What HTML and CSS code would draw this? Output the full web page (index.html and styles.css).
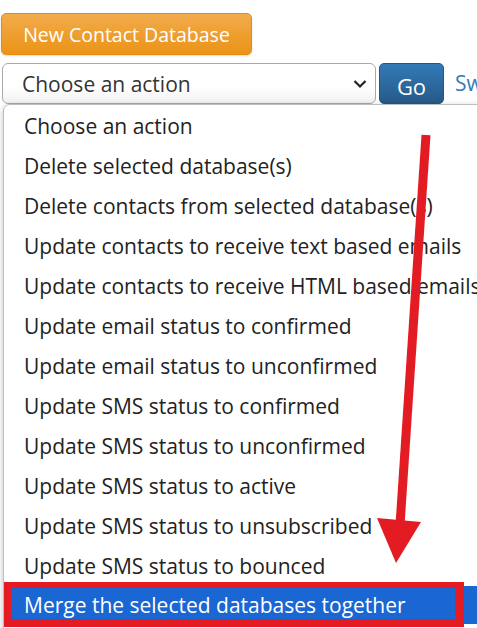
FILE: index.html
```html
<!DOCTYPE html>
<html>
<head>
<meta charset="utf-8">
<link rel="stylesheet" href="styles.css">
</head>
<body>
<div class="page">
  <div class="top">
    <button class="btn-new">New Contact Database</button>
  </div>
  <div class="actions">
    <div class="select">
      <span class="select-text">Choose an action</span>
      <svg class="chev" width="14" height="10" viewBox="0 0 14 10"><path d="M1.5 2 L7 7.5 L12.5 2" fill="none" stroke="#222" stroke-width="2.2"/></svg>
    </div>
    <button class="btn-go">Go</button>
    <a class="link" href="#">Switch</a>
  </div>

  <ul class="menu">
    <li>Choose an action</li>
    <li>Delete selected database(s)</li>
    <li>Delete contacts from selected database(s)</li>
    <li>Update contacts to receive text based emails</li>
    <li>Update contacts to receive HTML based emails</li>
    <li>Update email status to confirmed</li>
    <li>Update email status to unconfirmed</li>
    <li>Update SMS status to confirmed</li>
    <li>Update SMS status to unconfirmed</li>
    <li>Update SMS status to active</li>
    <li>Update SMS status to unsubscribed</li>
    <li>Update SMS status to bounced</li>
    <li class="active">Merge the selected databases together</li>
  </ul>

  <div class="highlight-box"></div>

  <svg class="arrow" width="477" height="628" viewBox="0 0 477 628">
    <line x1="426" y1="135" x2="400" y2="525" stroke="#e31c23" stroke-width="9"/>
    <polygon points="377,518 421,522 396,563" fill="#e31c23"/>
  </svg>
</div>
</body>
</html>
```
FILE: styles.css
```css
html, body {
  margin: 0;
  padding: 0;
  background: #fff;
  font-family: "Open Sans", "Noto Sans", sans-serif;
  overflow: hidden;
}
.page {
  position: relative;
  width: 477px;
  height: 628px;
  overflow: hidden;
}
.top {
  padding: 13px 0 0 1px;
}
.btn-new {
  display: block;
  height: 42px;
  width: 251px;
  border: 1px solid #e38d13;
  border-radius: 5px;
  background: linear-gradient(#f2ab4c, #eb9316);
  color: #fff;
  font-family: "Open Sans", sans-serif;
  font-size: 19.5px;
  padding: 0;
  box-shadow: 0 1px 2px rgba(0,0,0,0.15);
}
.actions {
  display: flex;
  align-items: flex-start;
  padding: 8px 0 0 2px;
  gap: 3px;
  white-space: nowrap;
}
.select {
  box-sizing: border-box;
  flex: 0 0 374px;
  width: 374px;
  height: 41px;
  border: 1px solid #a9a9a9;
  border-radius: 6px;
  background: linear-gradient(#fff 60%, #f1f1f1);
  display: flex;
  align-items: center;
  justify-content: space-between;
  padding: 0 8px 0 19px;
}
.select-text {
  font-size: 21px;
  color: #333;
}
.chev {
  margin-top: 1px;
}
.btn-go {
  box-sizing: border-box;
  flex: 0 0 65px;
  width: 65px;
  height: 41px;
  border: 1px solid #245580;
  border-radius: 5px;
  background: linear-gradient(#337ab7, #265a88);
  color: #fff;
  font-family: "Open Sans", sans-serif;
  font-size: 22px;
  padding: 5px 0 0;
}
.link {
  flex: 0 0 auto;
  margin-left: 8px;
  margin-top: 6px;
  font-size: 21px;
  color: #337ab7;
  text-decoration: none;
}
.menu {
  position: absolute;
  left: 3px;
  top: 104px;
  width: 490px;
  height: 540px;
  margin: 0;
  padding: 1px 0 0 1px;
  list-style: none;
  background: #fff;
  border: 1px solid #bdbdbd;
  border-radius: 7px;
  box-shadow: 0 2px 6px rgba(0,0,0,0.25);
}
.menu li {
  height: 40px;
  line-height: 40px;
  padding-left: 19px;
  font-size: 21px;
  color: #222;
  white-space: nowrap;
}
.menu li.active {
  background: #1a66d2;
  color: #fff;
  width: 451px;
  height: 38px;
  line-height: 38px;
  border-radius: 0 0 7px 0;
  padding-right: 20px;
}
.highlight-box {
  position: absolute;
  left: 4px;
  top: 582px;
  width: 444px;
  height: 31px;
  border: 7px solid #e41b22;
  border-top-width: 6px;
  border-bottom-width: 8px;
  border-right-width: 9px;
}
.arrow {
  position: absolute;
  left: 0;
  top: 0;
  pointer-events: none;
}
```
